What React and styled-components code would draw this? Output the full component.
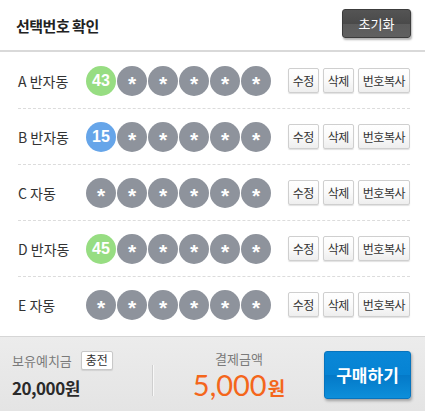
import React from 'react';
import styled, { createGlobalStyle } from 'styled-components';

const GlobalStyle = createGlobalStyle`
  body {
    margin: 0;
    background: #fff;
    font-family: "Noto Sans CJK KR", "Noto Sans", sans-serif;
  }
`;

const Panel = styled.div`
  width: 425px;
  height: 411px;
  display: flex;
  flex-direction: column;
  background: #fff;
  box-sizing: border-box;
`;

const Header = styled.div`
  height: 52px;
  flex-shrink: 0;
  display: flex;
  align-items: center;
  justify-content: space-between;
  padding: 0 14px 0 16px;
  border-bottom: 2px solid #d9d9d9;
  box-sizing: border-box;
`;

const Title = styled.h1`
  margin: 0;
  font-size: 15px;
  font-weight: 700;
  color: #222;
  letter-spacing: -0.5px;
`;

const ResetButton = styled.button`
  width: 69px;
  height: 29px;
  margin-top: -3px;
  border: 1px solid #3c3c3c;
  border-radius: 3px;
  background: linear-gradient(#545454 0%, #4a4a4a 50%, #5c5c5c 51%, #606060 100%);
  color: #fff;
  font-family: inherit;
  font-size: 13px;
  line-height: 1;
  box-shadow: 1px 2px 2px rgba(0, 0, 0, 0.3);
`;

const List = styled.div`
  flex: 1;
  padding: 1px 15px 0 18px;
`;

const Row = styled.div`
  height: 56px;
  display: flex;
  align-items: center;
  border-bottom: 1px dashed ${({ $last }) => ($last ? 'transparent' : '#dcdcdc')};
  box-sizing: border-box;
`;

const Label = styled.div`
  width: 68px;
  font-size: 14px;
  line-height: 1;
  color: #333;
`;

const Balls = styled.div`
  display: flex;
  gap: 1px;
`;

const ballColors = {
  green: '#97dd82',
  blue: '#66a5e9',
  gray: '#8e939c',
};

const Ball = styled.div`
  width: 30px;
  height: 30px;
  border-radius: 50%;
  background: ${({ $color }) => ballColors[$color]};
  color: #fff;
  display: flex;
  align-items: center;
  justify-content: center;
  font-family: "Liberation Sans", Arial, sans-serif;
  font-weight: 700;
  font-size: ${({ $star }) => ($star ? '21px' : '16px')};
  padding-top: ${({ $star }) => ($star ? '6px' : '0')};
  box-sizing: border-box;
`;

const Actions = styled.div`
  margin-left: auto;
  display: flex;
  gap: 4px;
`;

const SmallButton = styled.button`
  height: 25px;
  padding: 0 4px;
  min-width: 30px;
  border: 1px solid #cfcfcf;
  border-radius: 2px;
  background: linear-gradient(#fff 0%, #fafafa 50%, #eeeeee 100%);
  color: #333;
  font-family: inherit;
  font-size: 12px;
  line-height: 1;
  box-shadow: 0 1px 1px rgba(0, 0, 0, 0.12);
  letter-spacing: -0.5px;
`;

const Footer = styled.div`
  height: 75px;
  flex-shrink: 0;
  display: flex;
  align-items: center;
  padding: 0 14px 0 12px;
  border-top: 1px solid #d6d6d6;
  background: linear-gradient(#ececec, #e4e4e4);
  box-sizing: border-box;
`;

const Balance = styled.div`
  width: 140px;
  display: flex;
  flex-direction: column;
  gap: 6px;
  margin-top: 2px;
`;

const BalanceTop = styled.div`
  display: flex;
  align-items: center;
  gap: 9px;
`;

const Caption = styled.span`
  font-size: 13px;
  line-height: 19px;
  color: #7a7a7a;
`;

const ChargeButton = styled.button`
  height: 19px;
  padding: 0 4px;
  border: 1px solid #c8c8c8;
  border-radius: 2px;
  background: #fff;
  font-family: inherit;
  font-size: 12px;
  line-height: 1;
  color: #333;
  box-shadow: 0 1px 1px rgba(0, 0, 0, 0.1);
`;

const BalanceValue = styled.div`
  font-size: 17px;
  line-height: 24px;
  font-weight: 700;
  color: #2a2a2a;
  letter-spacing: -0.5px;
`;

const Divider = styled.div`
  width: 1px;
  height: 31px;
  margin-top: 12px;
  background: #cfcfcf;
  border-right: 1px solid #f8f8f8;
`;

const Payment = styled.div`
  flex: 1;
  display: flex;
  flex-direction: column;
  align-items: center;
  margin-top: 6px;
`;

const PayValue = styled.div`
  color: #f4661b;
  font-family: Lato, "Noto Sans CJK KR", sans-serif;
  font-size: 29px;
  line-height: 34px;
  span {
    font-family: "Noto Sans CJK KR", sans-serif;
    font-size: 19px;
    font-weight: 700;
    margin-left: 1px;
  }
`;

const BuyButton = styled.button`
  width: 87px;
  height: 48px;
  margin-top: 1px;
  border: 1px solid #0874bd;
  border-radius: 3px;
  background: linear-gradient(#0a87d7 0%, #0683d3 50%, #0479c8 51%, #0d8fda 100%);
  color: #fff;
  font-family: inherit;
  font-size: 17px;
  font-weight: 700;
  line-height: 1;
  box-shadow: 1px 2px 3px rgba(0, 0, 0, 0.3);
`;

const rows = [
  { label: 'A 반자동', num: 43, color: 'green' },
  { label: 'B 반자동', num: 15, color: 'blue' },
  { label: 'C 자동' },
  { label: 'D 반자동', num: 45, color: 'green' },
  { label: 'E 자동' },
];

const App = () => {
  return (
    <Panel>
      <GlobalStyle />
      <Header>
        <Title>선택번호 확인</Title>
        <ResetButton>초기화</ResetButton>
      </Header>
      <List>
        {rows.map((row, i) => {
          const stars = row.num ? 5 : 6;
          return (
            <Row key={row.label} $last={i === rows.length - 1}>
              <Label>{row.label}</Label>
              <Balls>
                {row.num && <Ball $color={row.color}>{row.num}</Ball>}
                {Array.from({ length: stars }).map((_, j) => (
                  <Ball key={j} $color="gray" $star>*</Ball>
                ))}
              </Balls>
              <Actions>
                <SmallButton>수정</SmallButton>
                <SmallButton>삭제</SmallButton>
                <SmallButton>번호복사</SmallButton>
              </Actions>
            </Row>
          );
        })}
      </List>
      <Footer>
        <Balance>
          <BalanceTop>
            <Caption>보유예치금</Caption>
            <ChargeButton>충전</ChargeButton>
          </BalanceTop>
          <BalanceValue>20,000원</BalanceValue>
        </Balance>
        <Divider />
        <Payment>
          <Caption>결제금액</Caption>
          <PayValue>5,000<span>원</span></PayValue>
        </Payment>
        <BuyButton>구매하기</BuyButton>
      </Footer>
    </Panel>
  );
};

export default App;
